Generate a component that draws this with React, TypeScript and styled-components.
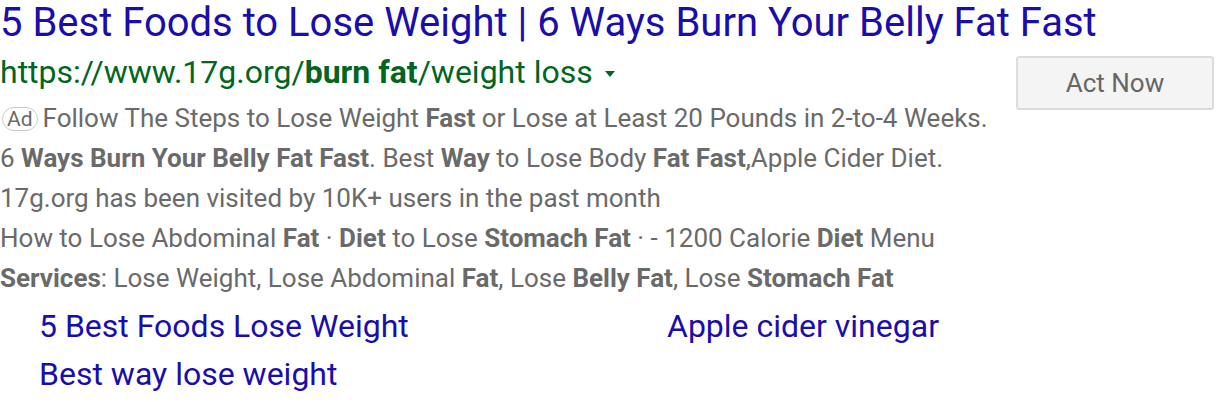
import styled, { createGlobalStyle } from 'styled-components'

const Global = createGlobalStyle`
    body {
        margin: 0;
        background: #fff;
        font-family: Roboto, "Liberation Sans", Arial, sans-serif;
    }
`

const Result = styled.div`
    width: 1216px;
    height: 402px;
    overflow: hidden;
`

const Title = styled.a`
    display: block;
    font-size: 40px;
    line-height: 46px;
    color: #1a0dab;
    text-decoration: none;
    white-space: nowrap;
`

const Body = styled.div`
    display: flex;
    align-items: flex-start;
`

const Main = styled.div`
    flex: 1;
    min-width: 0;
`

const Url = styled.div`
    display: flex;
    align-items: center;
    gap: 12px;
    font-size: 32px;
    line-height: 52px;
    color: #006621;
    white-space: nowrap;
    b {
        font-weight: 700;
    }
`

const Caret = styled.span`
    width: 0;
    height: 0;
    border-left: 5px solid transparent;
    border-right: 5px solid transparent;
    border-top: 6px solid #006621;
    margin-top: 4px;
`

const Line = styled.div`
    font-size: 26px;
    line-height: 40px;
    color: #6a6a6a;
    white-space: nowrap;
    b {
        font-weight: 700;
    }
`

const AdBadge = styled.span`
    display: inline-block;
    font-size: 21px;
    line-height: 22px;
    padding: 0 4px;
    margin: 0 5px 0 2px;
    border: 1px solid #c9c9c9;
    border-radius: 12px;
    color: #6a6a6a;
    vertical-align: 1px;
`

const Button = styled.button`
    flex: none;
    width: 198px;
    height: 54px;
    margin-top: 10px;
    margin-right: 2px;
    background: #f4f4f4;
    border: 2px solid #dcdcdc;
    border-radius: 3px;
    font-family: inherit;
    font-size: 26px;
    color: #666;
    cursor: pointer;
`

const Sitelinks = styled.div`
    display: grid;
    grid-template-columns: 628px auto;
    padding-left: 39px;
    margin-top: 4px;
`

const Sitelink = styled.a`
    font-size: 32px;
    line-height: 48px;
    color: #1a0dab;
    text-decoration: none;
    white-space: nowrap;
`

export default function App() {
    return (
        <Result>
            <Global />
            <Title href="#">5 Best Foods to Lose Weight | 6 Ways Burn Your Belly Fat Fast</Title>
            <Body>
                <Main>
                    <Url>
                        <span>
                            https://www.17g.org/<b>burn fat</b>/weight loss
                        </span>
                        <Caret />
                    </Url>
                    <Line>
                        <AdBadge>Ad</AdBadge>Follow The Steps to Lose Weight <b>Fast</b> or Lose at Least 20 Pounds in 2-to-4 Weeks.
                    </Line>
                    <Line>
                        6 <b>Ways Burn Your Belly Fat Fast</b>. Best <b>Way</b> to Lose Body <b>Fat Fast</b>,Apple Cider Diet.
                    </Line>
                    <Line>17g.org has been visited by 10K+ users in the past month</Line>
                    <Line>
                        How to Lose Abdominal <b>Fat</b> · <b>Diet</b> to Lose <b>Stomach Fat</b> · - 1200 Calorie <b>Diet</b> Menu
                    </Line>
                    <Line>
                        <b>Services</b>: Lose Weight, Lose Abdominal <b>Fat</b>, Lose <b>Belly Fat</b>, Lose <b>Stomach Fat</b>
                    </Line>
                </Main>
                <Button>Act Now</Button>
            </Body>
            <Sitelinks>
                <Sitelink href="#">5 Best Foods Lose Weight</Sitelink>
                <Sitelink href="#">Apple cider vinegar</Sitelink>
                <Sitelink href="#">Best way lose weight</Sitelink>
            </Sitelinks>
        </Result>
    )
}
